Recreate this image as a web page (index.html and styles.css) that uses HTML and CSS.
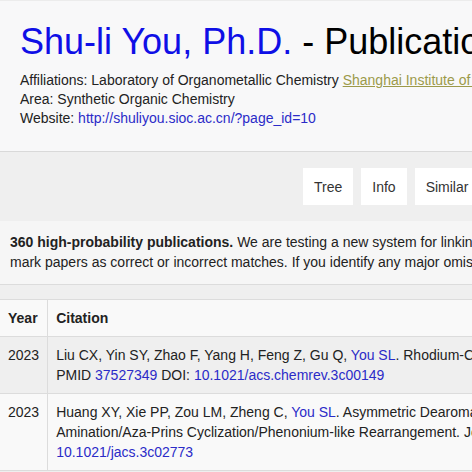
FILE: index.html
```html
<!DOCTYPE html>
<html>
<head>
<meta charset="utf-8">
<title>Shu-li You, Ph.D. - Publications</title>
<link rel="stylesheet" href="styles.css">
</head>
<body>
<div class="page">
  <header class="header">
    <h1 class="title"><a class="title-link" href="#">Shu-li You, Ph.D.</a> - Publications</h1>
    <div class="meta">Affiliations: Laboratory of Organometallic Chemistry <a class="inst" href="#">Shanghai Institute of Organic Chemistry</a>, Chinese Academy of Sciences</div>
    <div class="meta">Area: Synthetic Organic Chemistry</div>
    <div class="meta">Website: <a class="link" href="#">http://shuliyou.sioc.ac.cn/?page_id=10</a></div>
  </header>
  <nav class="nav">
    <a class="btn" href="#">Tree</a>
    <a class="btn" href="#">Info</a>
    <a class="btn" href="#">Similar</a>
    <a class="btn" href="#">Publications</a>
  </nav>
  <div class="notice">
    <b>360 high-probability publications.</b> We are testing a new system for linking publications to authors. You can help! If you notice any inaccuracies, please sign in and<br>mark papers as correct or incorrect matches. If you identify any major omissions or other inaccuracies in the publication list, please let us know.
  </div>
  <table class="pubs">
    <thead>
      <tr><th class="year">Year</th><th>Citation</th></tr>
    </thead>
    <tbody>
      <tr class="odd">
        <td class="year">2023</td>
        <td>Liu CX, Yin SY, Zhao F, Yang H, Feng Z, Gu Q, <a class="link" href="#">You SL</a>. Rhodium-Catalyzed Asymmetric C-H Functionalization Reactions. Chemical Reviews.<br>PMID <a class="link" href="#">37527349</a> DOI: <a class="link" href="#">10.1021/acs.chemrev.3c00149</a></td>
      </tr>
      <tr>
        <td class="year">2023</td>
        <td>Huang XY, Xie PP, Zou LM, Zheng C, <a class="link" href="#">You SL</a>. Asymmetric Dearomatization of Indoles via Ir-Catalyzed Allylic<br>Amination/Aza-Prins Cyclization/Phenonium-like Rearrangement. Journal of the American Chemical Society. PMID <a class="link" href="#">37384444</a> DOI:<br><a class="link" href="#">10.1021/jacs.3c02773</a></td>
      </tr>
    </tbody>
  </table>
</div>
</body>
</html>
```

FILE: styles.css
```css
html {
  overflow: hidden;
}
body {
  margin: 0;
  background: #efefef;
  font-family: "Liberation Sans", Arial, sans-serif;
  font-size: 14px;
  color: #222;
}
.page {
  width: 1100px;
}
.header {
  background: #f8f8f9;
  border-top: 1px solid #ececec;
  padding: 21px 20px 23px;
  border-bottom: 1px solid #d9d9d9;
}
.title {
  margin: 0 0 9px;
  font-size: 36px;
  font-weight: normal;
  line-height: 40px;
  color: #000;
  white-space: nowrap;
}
.title-link {
  color: #0f0fe6;
  text-decoration: none;
}
.meta {
  line-height: 19px;
  white-space: nowrap;
}
.inst {
  color: #9c9a4a;
  text-decoration: underline;
}
.link {
  color: #2b2bc8;
  text-decoration: none;
}
.nav {
  display: flex;
  gap: 8px;
  padding: 16px 0 16px 303px;
  background: #efefef;
}
.btn {
  display: flex;
  align-items: center;
  height: 37px;
  padding: 0 11px;
  background: #fff;
  color: #333;
  text-decoration: none;
}
.notice {
  background: #f6f6f6;
  padding: 11px 10px 12px;
  line-height: 20px;
  white-space: nowrap;
  border-bottom: 1px solid #dcdcdc;
}
.pubs {
  margin-top: 14px;
  border-collapse: collapse;
  background: #f9f9f9;
  width: 1100px;
  border-top: 1px solid #dcdcdc;
}
.pubs th,
.pubs td {
  padding: 8px;
  line-height: 20px;
  text-align: left;
  vertical-align: top;
  white-space: nowrap;
  border-bottom: 1px solid #dcdcdc;
}
.pubs th {
  font-weight: bold;
}
.pubs .year {
  width: 31px;
  border-right: 1px solid #dcdcdc;
}
.pubs tr.odd td {
  background: #efefef;
}
```
